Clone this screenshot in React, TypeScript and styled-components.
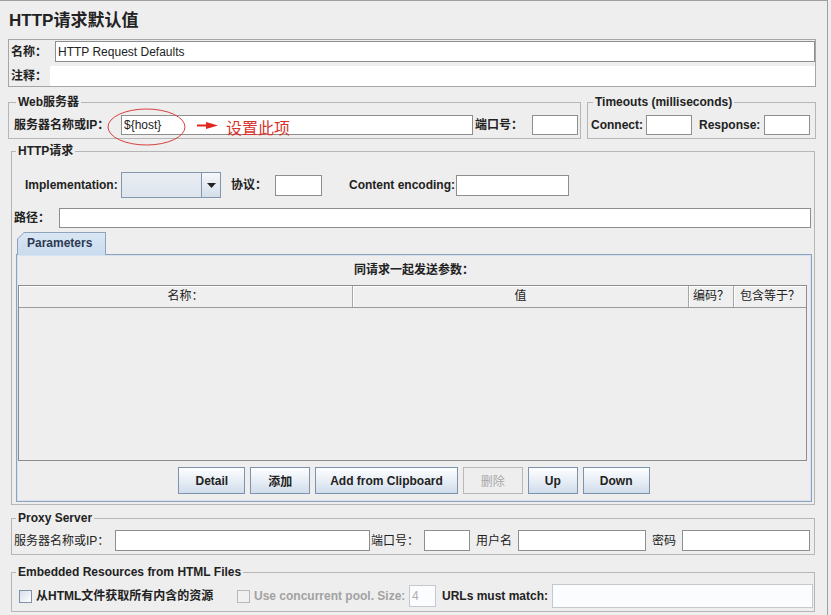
import React from 'react';
import styled, {createGlobalStyle} from 'styled-components';

const uiFont = `"Liberation Sans", "Noto Sans CJK SC", sans-serif`;

const GlobalStyle = createGlobalStyle`
  html, body {
    margin: 0;
    padding: 0;
    background: #eeeeee;
  }

  body {
    font-family: ${uiFont};
    font-size: 12px;
    color: #222;
  }
`;

const Page = styled.div`
  box-sizing: border-box;
  width: 828px;
  height: 615px;
  padding: 10px 11px 0 8px;
  border-top: 1px solid #a0a0a0;
  border-right: 1px solid #a0a0a0;
  display: flex;
  flex-direction: column;
`;

const Title = styled.h1`
  margin: 0 0 8px 1px;
  font-size: 17px;
  line-height: 20px;
  font-weight: bold;
  color: #222;
`;

const NameBox = styled.div`
  border: 1px solid #a6a6a6;
  padding: 1px 0 0 2px;
  display: flex;
  flex-direction: column;
  gap: 4px;
`;

const Row = styled.div<{$h?: number}>`
  position: relative;
  display: flex;
  align-items: center;
  height: ${p => p.$h ?? 21}px;
`;

const Label = styled.span<{$w?: number; $pl?: number; $regular?: boolean; $muted?: boolean}>`
  box-sizing: border-box;
  flex-shrink: 0;
  white-space: nowrap;
  width: ${p => (p.$w ? `${p.$w}px` : 'auto')};
  padding-left: ${p => p.$pl ?? 0}px;
  font-weight: ${p => (p.$regular ? 'normal' : 'bold')};
  color: ${p => (p.$muted ? '#a2a2a2' : '#222')};
  line-height: 16px;
`;

const TextInput = styled.input<{$w?: number; $h?: number; $plain?: boolean; $faint?: boolean}>`
  box-sizing: border-box;
  margin: 0;
  height: ${p => p.$h ?? 21}px;
  ${p => (p.$w ? `width: ${p.$w}px; flex-shrink: 0;` : 'flex: 1; min-width: 0;')}
  padding: 0 2px;
  border: ${p => (p.$plain ? 'none' : `1px solid ${p.$faint ? '#c4c9d0' : '#8e8e8e'}`)};
  background: ${p => (p.$faint ? '#fbfcfe' : '#fff')};
  font-family: ${uiFont};
  font-size: 12px;
  color: ${p => (p.$faint ? '#b0b0b0' : '#222')};
  outline: none;
`;

const ServerRow = styled.div`
  display: flex;
  gap: 6px;
  margin-top: 8px;
`;

const Group = styled.fieldset<{$pad: string; $w?: number; $grow?: boolean; $m?: string}>`
  min-width: 0;
  margin: ${p => p.$m ?? '0'};
  padding: ${p => p.$pad};
  border: 1px solid #b6b6b6;
  ${p => (p.$grow ? 'flex: 1;' : '')}
  ${p => (p.$w ? `width: ${p.$w}px; flex-shrink: 0; box-sizing: border-box;` : '')}
`;

const Legend = styled.legend`
  margin-left: 2px;
  padding: 0 2px;
  font-size: 12px;
  line-height: 14px;
  font-weight: bold;
  color: #222;
`;

const Ellipse = styled.svg`
  position: absolute;
  left: 93px;
  top: -7px;
  pointer-events: none;
`;

const Arrow = styled.svg`
  position: absolute;
  left: 183px;
  top: 7px;
`;

const Note = styled.span`
  position: absolute;
  left: 212px;
  top: 3px;
  font-family: "Noto Sans CJK SC", sans-serif;
  font-size: 16px;
  line-height: 18px;
  color: #d8322c;
`;

const ComboBox = styled.div`
  box-sizing: border-box;
  display: flex;
  width: 100px;
  height: 26px;
  flex-shrink: 0;
  border: 1px solid #8496ad;
  background: linear-gradient(#e8edf3, #dfe5ed);
`;

const ComboField = styled.div`
  flex: 1;
`;

const ComboArrow = styled.div`
  width: 18px;
  border-left: 1px solid #8496ad;
  background: linear-gradient(#f6f8fb, #d3deea);
  display: flex;
  align-items: center;
  justify-content: center;
`;

const PathRow = styled(Row)`
  margin-top: 10px;
  padding-right: 1px;
`;

const ImplRow = styled(Row)`
  margin-top: 14px;
  padding-left: 11px;
`;

const Tabs = styled.div`
  margin: 4px 0 0 2px;
  display: flex;
  flex-direction: column;
`;

const TabStrip = styled.div`
  display: flex;
  padding-left: 1px;
  position: relative;
  z-index: 1;
  margin-bottom: -1px;
`;

const Tab = styled.div`
  width: 89px;
  height: 23px;
  box-sizing: border-box;
  padding: 1px 1px 0 1px;
  background: #8ea2bc;
  clip-path: polygon(7px 0, 100% 0, 100% 100%, 0 100%, 0 7px);
  display: flex;
`;

const TabFace = styled.div`
  flex: 1;
  padding-left: 9px;
  background: linear-gradient(#d9e6f4, #c9dbee);
  clip-path: polygon(6px 0, 100% 0, 100% 100%, 0 100%, 0 6px);
  font-weight: bold;
  color: #2d3a52;
  line-height: 20px;
`;

const TabPanel = styled.div`
  box-sizing: border-box;
  height: 248px;
  border: 1px solid #8ea2bc;
  box-shadow: inset 0 0 0 1px #d6e2ef;
  display: flex;
  flex-direction: column;
`;

const Caption = styled.div`
  height: 30px;
  line-height: 30px;
  text-align: center;
  font-weight: bold;
`;

const Table = styled.div`
  box-sizing: border-box;
  height: 176px;
  margin: 0 4px 0 1px;
  border: 1px solid #8c8c8c;
  background: #eeeeee;
`;

const HeaderRow = styled.div`
  display: grid;
  grid-template-columns: 334px 336px 45px 1fr;
  height: 22px;
  box-sizing: border-box;
  border-bottom: 1px solid #9a9a9a;
`;

const HeaderCell = styled.div`
  line-height: 21px;
  text-align: center;
  background: #efefef;
  box-shadow: inset 1px 1px 0 #fff;
  border-right: 1px solid #a6a6a6;

  &:last-child {
    border-right: none;
  }
`;

const ButtonBar = styled.div`
  display: flex;
  justify-content: center;
  gap: 5px;
  padding-top: 6px;
`;

const Button = styled.button<{$px?: number}>`
  box-sizing: border-box;
  height: 27px;
  margin: 0;
  padding: 0 ${p => p.$px ?? 16}px;
  border: 1px solid #7f92ab;
  border-radius: 0;
  background: linear-gradient(#fdfeff 0%, #e8eef6 50%, #d0ddeb 100%);
  font-family: ${uiFont};
  font-size: 12px;
  font-weight: bold;
  color: #222;

  &:disabled {
    border-color: #b8b8b8;
    background: #eeeeee;
    color: #a8a8a8;
    font-weight: normal;
  }
`;

const CheckItem = styled.label<{$w?: number}>`
  box-sizing: border-box;
  display: flex;
  align-items: center;
  gap: 4px;
  flex-shrink: 0;
  ${p => (p.$w ? `width: ${p.$w}px;` : '')}
`;

const CheckBox = styled.span<{$disabled?: boolean}>`
  box-sizing: border-box;
  width: 13px;
  height: 13px;
  border: 1px solid ${p => (p.$disabled ? '#b8b8b8' : '#8091a8')};
  background: ${p => (p.$disabled ? '#f0f0f0' : 'linear-gradient(135deg, #d5dfeb, #ffffff)')};
`;

const EmbeddedRow = styled(Row)`
  padding-left: 5px;
`;

export default function App() {
  return (
    <>
      <GlobalStyle />
      <Page>
        <Title>HTTP请求默认值</Title>

        <NameBox>
          <Row>
            <Label $w={44}>名称：</Label>
            <TextInput defaultValue="HTTP Request Defaults" />
          </Row>
          <Row $h={20}>
            <Label $w={39}>注释：</Label>
            <TextInput $plain $h={20} />
          </Row>
        </NameBox>

        <ServerRow>
          <Group $grow $pad="6px 2px 3px 5px">
            <Legend>Web服务器</Legend>
            <Row $h={20}>
              <Label $w={107}>服务器名称或IP：</Label>
              <TextInput $h={20} defaultValue="${host}" />
              <Label $w={59} $pl={2}>端口号：</Label>
              <TextInput $h={20} $w={46} />
              <Ellipse width="79" height="38" viewBox="0 0 79 38">
                <ellipse cx="39.5" cy="19" rx="38.5" ry="18" fill="none" stroke="#d8413d" strokeWidth="1" />
              </Ellipse>
              <Arrow width="21" height="7" viewBox="0 0 21 7">
                <rect x="0" y="2.5" width="11" height="2" fill="#e0261f" />
                <polygon points="9,0 21,3.5 9,7" fill="#e0261f" />
              </Arrow>
              <Note>设置此项</Note>
            </Row>
          </Group>
          <Group $w={229} $pad="6px 4px 3px 3px">
            <Legend>Timeouts (milliseconds)</Legend>
            <Row $h={20}>
              <Label $w={55}>Connect:</Label>
              <TextInput $h={20} $w={46} />
              <Label $w={72} $pl={7}>Response:</Label>
              <TextInput $h={20} $w={46} />
            </Row>
          </Group>
        </ServerRow>

        <Group $m="5px 1px 0 3px" $pad="0 2px 2px 2px">
          <Legend>HTTP请求</Legend>
          <ImplRow $h={26}>
            <Label $w={96}>Implementation:</Label>
            <ComboBox>
              <ComboField />
              <ComboArrow>
                <svg width="9" height="5" viewBox="0 0 9 5">
                  <polygon points="0,0 9,0 4.5,5" fill="#222" />
                </svg>
              </ComboArrow>
            </ComboBox>
            <Label $w={54} $pl={10}>协议：</Label>
            <TextInput $w={47} />
            <Label $w={134} $pl={27}>Content encoding:</Label>
            <TextInput $w={113} />
          </ImplRow>
          <PathRow $h={20}>
            <Label $w={45}>路径：</Label>
            <TextInput $h={20} />
          </PathRow>
          <Tabs>
            <TabStrip>
              <Tab>
                <TabFace>Parameters</TabFace>
              </Tab>
            </TabStrip>
            <TabPanel>
              <Caption>同请求一起发送参数：</Caption>
              <Table>
                <HeaderRow>
                  <HeaderCell>名称：</HeaderCell>
                  <HeaderCell>值</HeaderCell>
                  <HeaderCell>编码？</HeaderCell>
                  <HeaderCell>包含等于？</HeaderCell>
                </HeaderRow>
              </Table>
              <ButtonBar>
                <Button>Detail</Button>
                <Button $px={17}>添加</Button>
                <Button $px={14}>Add from Clipboard</Button>
                <Button $px={17} disabled>删除</Button>
                <Button>Up</Button>
                <Button>Down</Button>
              </ButtonBar>
            </TabPanel>
          </Tabs>
        </Group>

        <Group $m="6px 1px 0 3px" $pad="5px 4px 3px 2px">
          <Legend>Proxy Server</Legend>
          <Row>
            <Label $w={101} $regular>服务器名称或IP：</Label>
            <TextInput />
            <Label $w={54} $pl={1} $regular>端口号：</Label>
            <TextInput $w={46} />
            <Label $w={48} $pl={6} $regular>用户名</Label>
            <TextInput $w={128} />
            <Label $w={36} $pl={6} $regular>密码</Label>
            <TextInput $w={128} />
          </Row>
        </Group>

        <Group $m="10px 1px 0 3px" $pad="5px 1px 3px 2px">
          <Legend>Embedded Resources from HTML Files</Legend>
          <EmbeddedRow $h={24}>
            <CheckItem $w={218}>
              <CheckBox />
              <Label>从HTML文件获取所有内含的资源</Label>
            </CheckItem>
            <CheckItem>
              <CheckBox $disabled />
              <Label $w={155} $muted>Use concurrent pool. Size:</Label>
            </CheckItem>
            <TextInput $w={27} $h={22} $faint defaultValue="4" />
            <Label $w={116} $pl={6}>URLs must match:</Label>
            <TextInput $h={24} $faint />
          </EmbeddedRow>
        </Group>
      </Page>
    </>
  );
}
